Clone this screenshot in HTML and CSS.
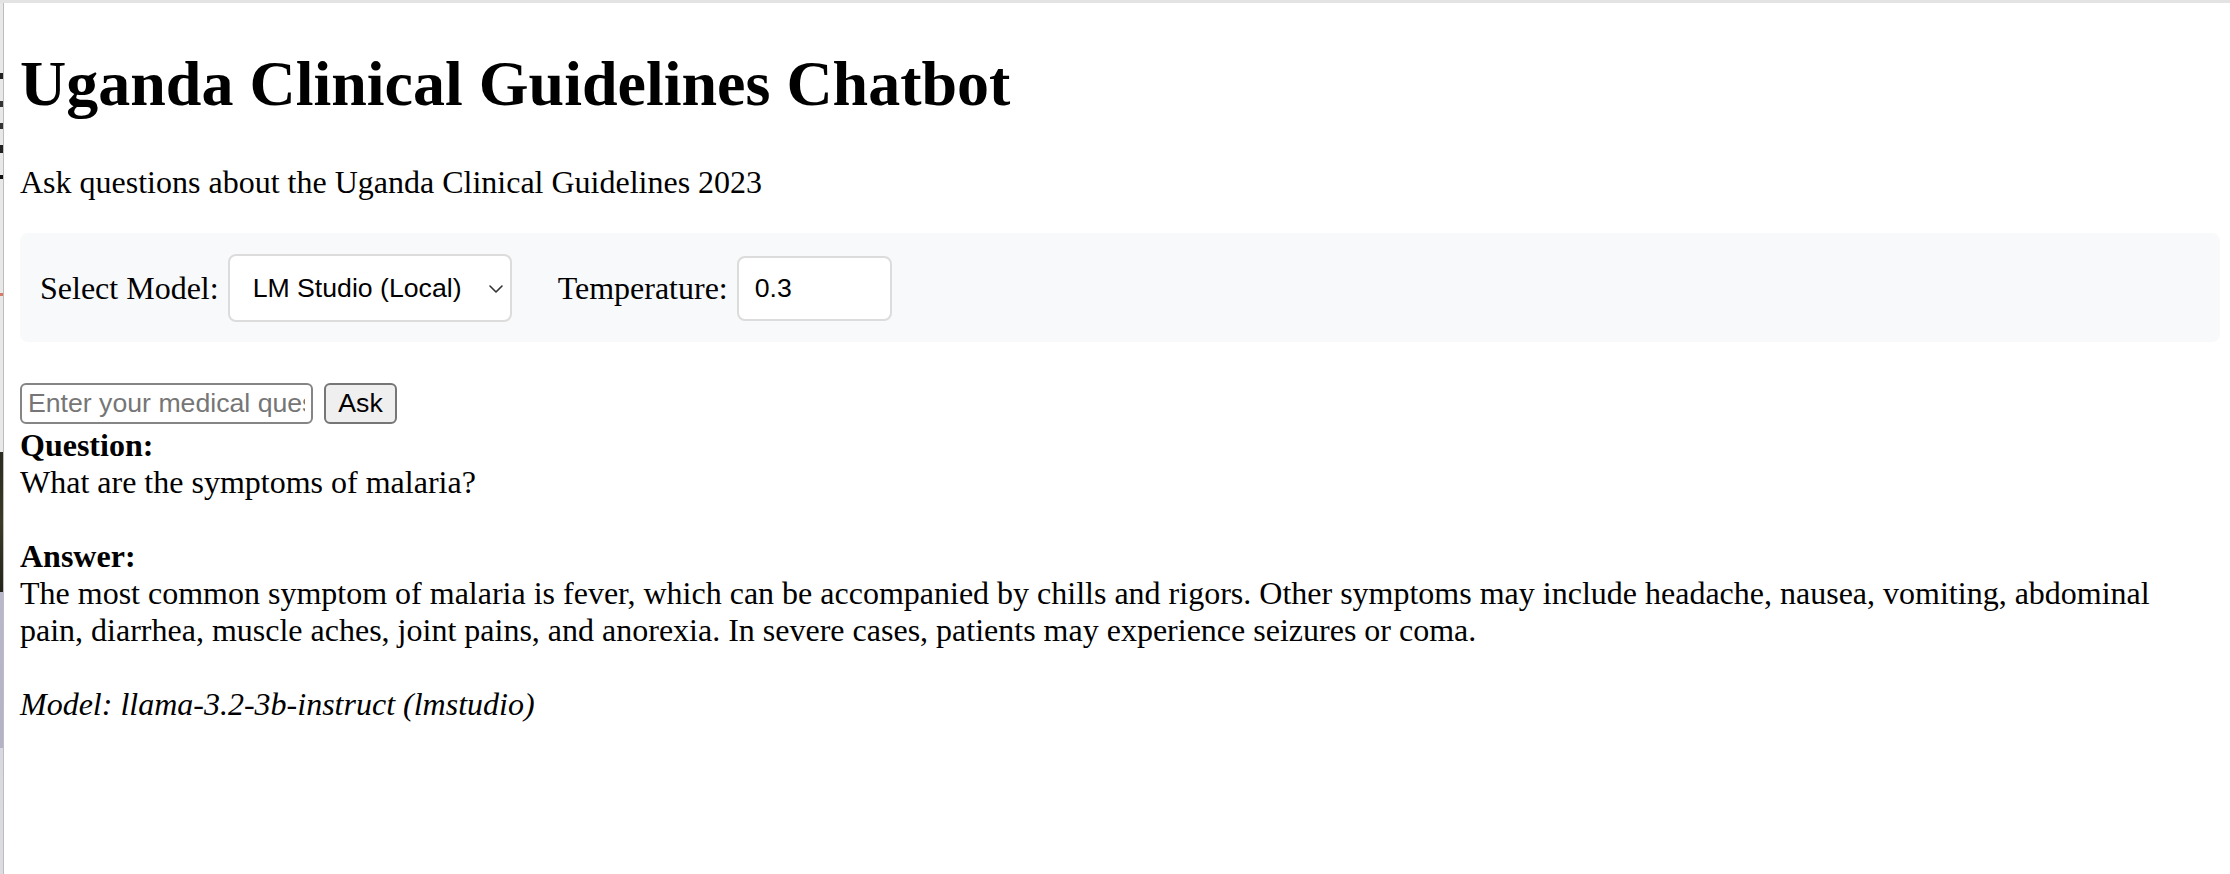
FILE: index.html
```html
<!DOCTYPE html>
<html lang="en">
<head>
<meta charset="utf-8">
<title>Uganda Clinical Guidelines Chatbot</title>
<link rel="stylesheet" href="styles.css">
</head>
<body>
<div class="screen">
  <div class="sliver"></div>
  <main class="page">
    <h1 class="title">Uganda Clinical Guidelines Chatbot</h1>
    <p class="subtitle">Ask questions about the Uganda Clinical Guidelines 2023</p>
    <div class="controls">
      <div class="group">
        <label class="label" for="model">Select Model:</label>
        <div class="select-wrap">
          <select id="model" class="select">
            <option>LM Studio (Local)</option>
          </select>
          <svg class="chevron" width="14" height="8" viewBox="0 0 14 8" aria-hidden="true"><path d="M1 1 L7 7 L13 1" fill="none" stroke="#333" stroke-width="1.6" stroke-linecap="round" stroke-linejoin="round"/></svg>
        </div>
      </div>
      <div class="group">
        <label class="label" for="temp">Temperature:</label>
        <input id="temp" class="num" type="number" value="0.3" step="0.1">
      </div>
    </div>
    <form class="ask-row">
      <input class="query" type="text" placeholder="Enter your medical question...">
      <button class="ask-btn" type="button">Ask</button>
    </form>
    <div class="response">
      <strong>Question:</strong><br>What are the symptoms of malaria?<br><br><strong>Answer:</strong><br>The most common symptom of malaria is fever, which can be accompanied by chills and rigors. Other symptoms may include headache, nausea, vomiting, abdominal pain, diarrhea, muscle aches, joint pains, and anorexia. In severe cases, patients may experience seizures or coma.<br><br><em>Model: llama-3.2-3b-instruct (lmstudio)</em>
    </div>
  </main>
</div>
</body>
</html>
```

FILE: styles.css
```css
html, body {
  margin: 0;
  padding: 0;
  background: #ffffff;
}

body {
  font-family: "Liberation Serif", "Times New Roman", serif;
  color: #000;
  overflow: hidden;
}

.screen {
  display: flex;
  height: 874px;
  box-sizing: border-box;
  border-top: 3px solid #e3e3e3;
}

.sliver {
  width: 3px;
  flex: none;
  border-right: 1px solid #bdbdbd;
  background: linear-gradient(to bottom,
    #e8e8e8 0px, #e8e8e8 70px, #222 70px, #222 76px,
    #e8e8e8 76px, #e8e8e8 98px, #333 98px, #333 104px,
    #e8e8e8 104px, #e8e8e8 120px, #333 120px, #333 126px,
    #e8e8e8 126px, #e8e8e8 142px, #222 142px, #222 150px,
    #e8e8e8 150px, #e8e8e8 172px, #111 172px, #111 176px,
    #e8e8e8 176px, #e8e8e8 290px, #d77a6a 290px, #d77a6a 293px,
    #e8e8e8 293px, #e8e8e8 449px,
    #2b2b1f 449px, #3a3a26 520px, #23231a 589px,
    #b8b7cb 589px, #b3b2c6 745px,
    #d8d8e0 745px, #dcdce2 100%);
}

.page {
  flex: 1;
  padding: 0 10px 0 16px;
  min-width: 0;
}

.title {
  font-size: 64px;
  font-weight: bold;
  line-height: normal;
  margin: 44px 0 43px;
}

.subtitle {
  font-size: 32px;
  line-height: normal;
  margin: 0 0 32px;
}

.controls {
  display: flex;
  align-items: center;
  gap: 46px;
  padding: 21px 20px 20px;
  background: #f8f9fa;
  border-radius: 8px;
}

.group {
  display: flex;
  align-items: center;
}

.label {
  font-size: 32px;
  margin-right: 9px;
}

.select-wrap {
  position: relative;
  display: flex;
}

.select {
  -webkit-appearance: none;
  appearance: none;
  box-sizing: border-box;
  width: 284px;
  height: 68px;
  padding: 0 40px 0 23px;
  border: 2px solid #dcdcdc;
  border-radius: 8px;
  background: #fff;
  color: #000;
  font-family: "Liberation Sans", Arial, sans-serif;
  font-size: 26.67px;
}

.chevron {
  position: absolute;
  right: 9px;
  top: 31px;
  pointer-events: none;
}

.num {
  box-sizing: border-box;
  width: 155px;
  height: 65px;
  padding: 0 16px;
  border: 2px solid #dcdcdc;
  border-radius: 8px;
  background: #fff;
  color: #000;
  font-family: "Liberation Sans", Arial, sans-serif;
  font-size: 26.67px;
  -moz-appearance: textfield;
}

.num::-webkit-inner-spin-button,
.num::-webkit-outer-spin-button {
  -webkit-appearance: none;
  margin: 0;
}

.ask-row {
  display: flex;
  align-items: center;
  gap: 11px;
  margin: 40px 0 0;
  height: 42px;
}

.query {
  box-sizing: border-box;
  width: 293px;
  height: 41px;
  padding: 0 6px;
  border: 2px solid #858585;
  border-radius: 6px;
  font-family: "Liberation Sans", Arial, sans-serif;
  font-size: 26.67px;
  color: #000;
  background: #fff;
}

.query::placeholder {
  color: #767676;
}

.ask-btn {
  box-sizing: border-box;
  width: 73px;
  height: 41px;
  padding: 0;
  border: 2px solid #767676;
  border-radius: 6px;
  background: #efefef;
  color: #000;
  font-family: "Liberation Sans", Arial, sans-serif;
  font-size: 26.67px;
}

.response {
  font-size: 32px;
  line-height: 37px;
  padding-top: 3px;
}
```
